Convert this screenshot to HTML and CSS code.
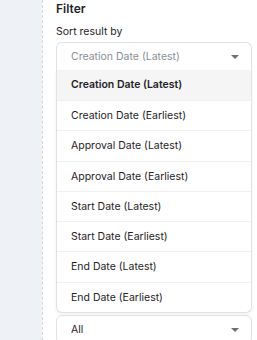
FILE: index.html
```html
<!DOCTYPE html>
<html lang="en">
<head>
    <meta charset="UTF-8">
    <title>Filter</title>
    <link rel="stylesheet" href="styles.css">
</head>
<body>
    <div class="page">
        <div class="side"></div>
        <div class="panel">
            <div class="title">Filter</div>
            <div class="label">Sort result by</div>
            <div class="select open">
                <span class="placeholder">Creation Date (Latest)</span>
                <span class="caret"></span>
            </div>
            <ul class="menu">
                <li class="active">Creation Date (Latest)</li>
                <li>Creation Date (Earliest)</li>
                <li>Approval Date (Latest)</li>
                <li>Approval Date (Earliest)</li>
                <li>Start Date (Latest)</li>
                <li>Start Date (Earliest)</li>
                <li>End Date (Latest)</li>
                <li>End Date (Earliest)</li>
            </ul>
            <div class="select">
                <span class="value">All</span>
                <span class="caret"></span>
            </div>
        </div>
    </div>
</body>
</html>
```

FILE: styles.css
```css
html, body
{
    margin: 0;
    height: 100%;
    overflow: hidden;
}
body
{
    font-family: Inter, "Noto Sans", sans-serif;
    color: #1f2328;
    background-color: #eef1f5;
}
.page
{
    display: flex;
    height: 340px;
}
.side
{
    width: 42px;
    flex-shrink: 0;
}
.panel
{
    flex: 1;
    background-color: #ffffff;
    border-left: 1px dashed #d5d9df;
    padding: 1px 5px 0 13px;
}
.title
{
    font-size: 12px;
    font-weight: 600;
    line-height: 16px;
}
.label
{
    font-size: 10.5px;
    margin-top: 8px;
    line-height: 14px;
}
.select
{
    display: flex;
    align-items: center;
    justify-content: space-between;
    height: 27px;
    border: 1px solid #dfe2e6;
    border-radius: 6px;
    padding: 0 12px 0 14px;
    font-size: 10.5px;
    margin-top: 3px;
}
.select.open
{
    border-bottom: none;
    border-radius: 6px 6px 0 0;
}
.placeholder
{
    color: #8a8f96;
}
.caret
{
    width: 0;
    height: 0;
    border-left: 4px solid transparent;
    border-right: 4px solid transparent;
    border-top: 4px solid #6b7079;
}
.menu
{
    list-style: none;
    margin: 0;
    padding: 0;
    border: 1px solid #dfe2e6;
    border-top: none;
    border-radius: 0 0 6px 6px;
    box-shadow: 0 2px 4px rgba(0, 0, 0, 0.06);
}
.menu li
{
    height: 29.3px;
    line-height: 29.3px;
    padding-left: 14px;
    font-size: 10.5px;
    border-top: 1px solid #f0f1f3;
}
.menu li:first-child
{
    height: 30px;
    line-height: 30px;
    border-top: none;
}
.menu li.active
{
    background-color: #f5f5f5;
    font-weight: 600;
}
.menu + .select
{
    margin-top: 2px;
}
```
